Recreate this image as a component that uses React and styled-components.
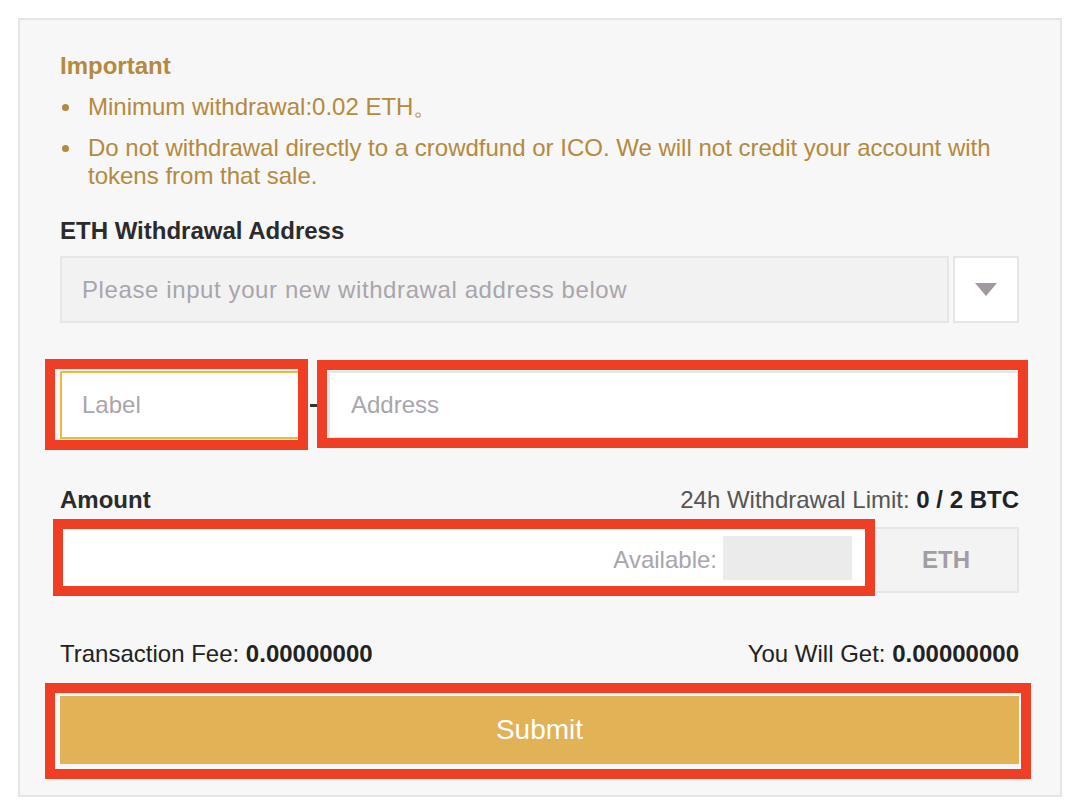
import React from 'react';
import styled, { createGlobalStyle } from 'styled-components';

const GlobalStyle = createGlobalStyle`
  html, body {
    margin: 0;
    padding: 0;
    background: #ffffff;
  }
  body {
    font-family: 'Liberation Sans', Arial, Helvetica, sans-serif;
  }
  * { box-sizing: border-box; }
`;

const gold = '#b38a3e';

const Page = styled.div`
  padding: 18px 0 0 18px;
`;

const Panel = styled.section`
  width: 1044px;
  border: 2px solid #e6e6e6;
  background: #f7f7f7;
  padding: 32px 41px 31px 40px;
`;

const Title = styled.h3`
  margin: 0;
  font-size: 24px;
  line-height: 28px;
  font-weight: 700;
  color: ${gold};
`;

const Notes = styled.ul`
  margin: 13px 0 0;
  padding: 0;
  list-style: none;
`;

const Note = styled.li`
  position: relative;
  padding-left: 28px;
  font-size: 24px;
  line-height: 28px;
  color: ${gold};

  & + & {
    margin-top: 13px;
  }

  &::before {
    content: '';
    position: absolute;
    left: 2px;
    top: 11px;
    width: 7px;
    height: 7px;
    border-radius: 50%;
    background: ${gold};
  }
`;

const FieldLabel = styled.div`
  margin-top: ${({ $gap }) => $gap}px;
  font-size: 24px;
  line-height: 28px;
  font-weight: 700;
  color: #2b2b2b;
`;

const SelectRow = styled.div`
  display: flex;
  gap: 4px;
  margin-top: 11px;
`;

const SelectBox = styled.div`
  flex: 1;
  height: 67px;
  display: flex;
  align-items: center;
  padding-left: 20px;
  border: 2px solid #e6e6e6;
  background: #f2f2f2;
  font-size: 24px;
  letter-spacing: 0.6px;
  color: #a9a5ab;
`;

const DropButton = styled.div`
  width: 66px;
  height: 67px;
  display: flex;
  align-items: center;
  justify-content: center;
  border: 2px solid #e6e6e6;
  background: #ffffff;
`;

const AddressRow = styled.div`
  display: flex;
  align-items: center;
  margin-top: 48px;
`;

const Marked = styled.div`
  position: relative;
  display: flex;
  flex: ${({ $grow }) => ($grow ? 1 : 'none')};

  &::after {
    content: '';
    position: absolute;
    top: ${({ $t }) => -$t}px;
    right: ${({ $r }) => -$r}px;
    bottom: ${({ $b }) => -$b}px;
    left: ${({ $l }) => -$l}px;
    border: 10px solid #ee3f24;
    pointer-events: none;
  }
`;

const TextInput = styled.input`
  width: ${({ $width }) => ($width ? `${$width}px` : '100%')};
  height: 68px;
  padding: 0 0 0 ${({ $pad }) => $pad}px;
  border: 2px solid ${({ $focus }) => ($focus ? '#f0b840' : '#e6e6e6')};
  background: #ffffff;
  font-family: inherit;
  font-size: 24px;
  color: #333;
  outline: none;

  &::placeholder {
    color: #a9a5ab;
  }
`;

const Dash = styled.div`
  width: 28px;
  display: flex;
  justify-content: center;

  &::before {
    content: '';
    width: 8px;
    height: 3px;
    background: #333;
  }
`;

const SpreadRow = styled.div`
  display: flex;
  justify-content: space-between;
  align-items: baseline;
  margin-top: ${({ $gap }) => $gap}px;
  font-size: 24px;
  line-height: 28px;
  color: ${({ $muted }) => ($muted ? '#555' : '#222')};
`;

const Strong = styled.b`
  font-weight: 700;
  color: #222;
`;

const AmountLabel = styled.span`
  font-weight: 700;
  color: #2b2b2b;
`;

const AmountGroup = styled.div`
  display: flex;
  height: 66px;
  margin-top: 13px;
`;

const AmountField = styled.div`
  width: 100%;
  height: 66px;
  display: flex;
  align-items: center;
  padding-right: 20px;
  border: 1px solid #e6e6e6;
  background: #ffffff;
`;

const BareInput = styled.input`
  flex: 1;
  min-width: 0;
  height: 100%;
  border: none;
  outline: none;
  background: transparent;
  font-family: inherit;
  font-size: 24px;
`;

const Available = styled.span`
  font-size: 24px;
  color: #a9a5ab;
  margin-right: 6px;
`;

const AvailableValue = styled.span`
  width: 129px;
  height: 44px;
  margin-top: -4px;
  background: #ebebeb;
`;

const Addon = styled.div`
  width: 146px;
  display: flex;
  align-items: center;
  justify-content: center;
  border: 2px solid #e6e6e6;
  background: #f3f3f3;
  font-size: 24px;
  font-weight: 700;
  color: #a39ca4;
`;

const SubmitButton = styled.button`
  width: 100%;
  height: 68px;
  border: none;
  background: #e2b257;
  color: #ffffff;
  font-family: inherit;
  font-size: 28px;
  cursor: pointer;
`;

const SubmitWrap = styled(Marked)`
  margin-top: 28px;
`;

const Caret = () => (
  <svg width="22" height="13" viewBox="0 0 22 13" aria-hidden="true">
    <polygon points="0,0 22,0 11,13" fill="#a09aa0" />
  </svg>
);

export default function App() {
  return (
    <>
      <GlobalStyle />
      <Page>
        <Panel>
          <Title>Important</Title>
          <Notes>
            <Note>Minimum withdrawal:0.02 ETH。</Note>
            <Note>
              Do not withdrawal directly to a crowdfund or ICO. We will not credit your account with
              tokens from that sale.
            </Note>
          </Notes>

          <FieldLabel $gap={27}>ETH Withdrawal Address</FieldLabel>
          <SelectRow>
            <SelectBox>Please input your new withdrawal address below</SelectBox>
            <DropButton>
              <Caret />
            </DropButton>
          </SelectRow>

          <AddressRow>
            <Marked $t={12} $r={8} $b={11} $l={15}>
              <TextInput $width={240} $pad={20} $focus placeholder="Label" />
            </Marked>
            <Dash />
            <Marked $grow $t={11} $r={9} $b={9} $l={11}>
              <TextInput $pad={21} placeholder="Address" />
            </Marked>
          </AddressRow>

          <SpreadRow $gap={47} $muted>
            <AmountLabel>Amount</AmountLabel>
            <span>
              24h Withdrawal Limit: <Strong>0 / 2 BTC</Strong>
            </span>
          </SpreadRow>
          <AmountGroup>
            <Marked $grow $t={8} $r={2} $b={3} $l={7}>
              <AmountField>
                <BareInput />
                <Available>Available:</Available>
                <AvailableValue />
              </AmountField>
            </Marked>
            <Addon>ETH</Addon>
          </AmountGroup>

          <SpreadRow $gap={47}>
            <span>
              Transaction Fee: <Strong>0.00000000</Strong>
            </span>
            <span>
              You Will Get: <Strong>0.00000000</Strong>
            </span>
          </SpreadRow>

          <SubmitWrap $t={13} $r={12} $b={15} $l={15}>
            <SubmitButton type="button">Submit</SubmitButton>
          </SubmitWrap>
        </Panel>
      </Page>
    </>
  );
}
